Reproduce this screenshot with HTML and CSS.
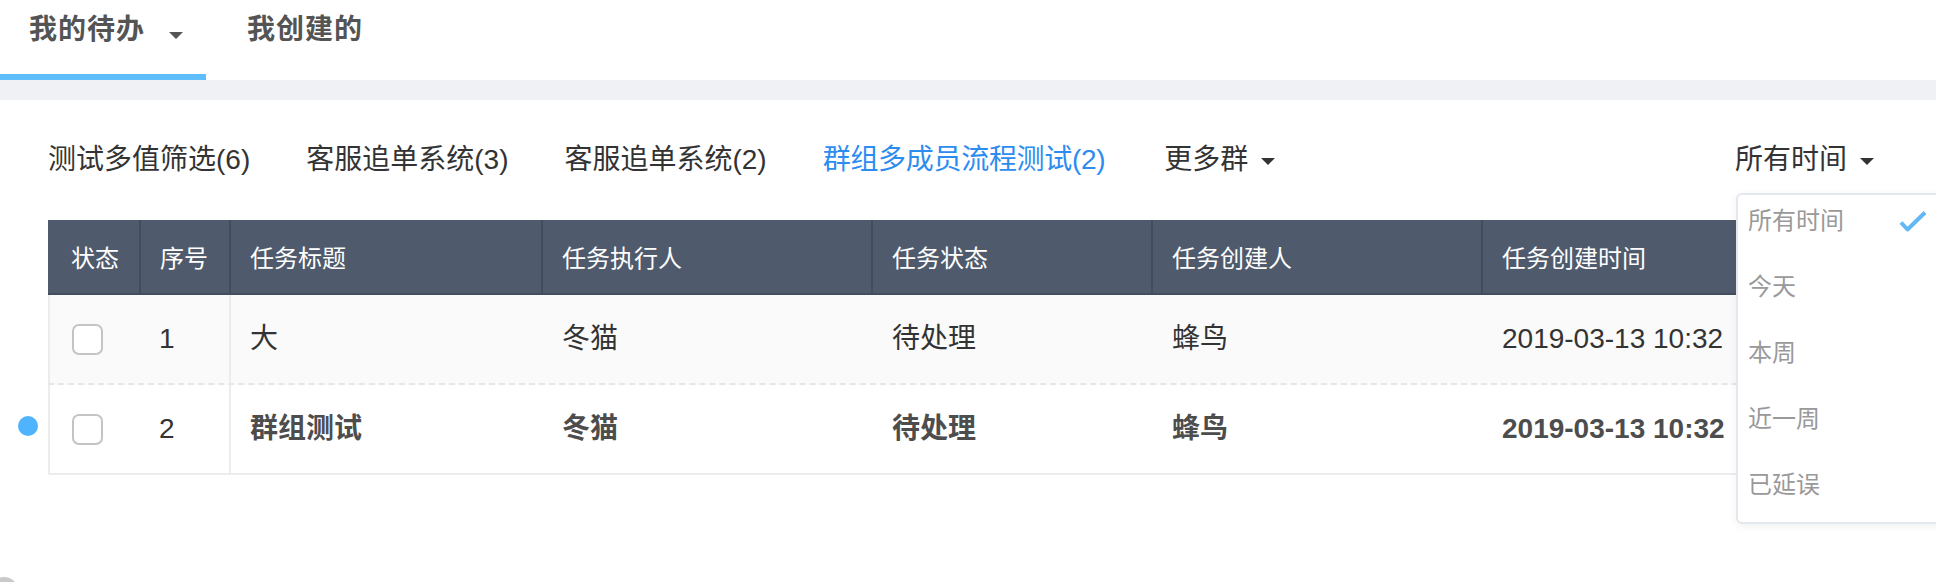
FILE: index.html
```html
<!DOCTYPE html>
<html lang="zh-CN">
<head>
<meta charset="utf-8">
<title>我的待办</title>
<link rel="stylesheet" href="styles.css">
</head>
<body>
<div class="page">
  <nav class="tabs">
    <div class="tab tab-first active"><span class="tab-label">我的待办</span><span class="caret caret-tab"></span></div>
    <div class="tab tab-second"><span class="tab-label">我创建的</span></div>
  </nav>
  <div class="band"></div>
  <main class="main">
    <div class="filters">
      <span class="filter">测试多值筛选(6)</span>
      <span class="filter">客服追单系统(3)</span>
      <span class="filter">客服追单系统(2)</span>
      <span class="filter filter-active">群组多成员流程测试(2)</span>
      <span class="filter filter-more">更多群<span class="caret caret-filter"></span></span>
      <div class="time">
        <span>所有时间</span><span class="caret caret-filter"></span>
        <ul class="dropdown">
          <li class="option selected"><span>所有时间</span>
            <svg class="check" width="28" height="21" viewBox="0 0 28 21"><polyline points="2,11.5 8.5,18.5 26,1.5" fill="none" stroke="#62b8f6" stroke-width="4" stroke-linejoin="round"/></svg>
          </li>
          <li class="option">今天</li>
          <li class="option">本周</li>
          <li class="option">近一周</li>
          <li class="option">已延误</li>
        </ul>
      </div>
    </div>

    <div class="table">
      <div class="grid thead">
        <div class="th th-first">状态</div>
        <div class="th">序号</div>
        <div class="th">任务标题</div>
        <div class="th">任务执行人</div>
        <div class="th">任务状态</div>
        <div class="th">任务创建人</div>
        <div class="th">任务创建时间</div>
      </div>
      <div class="grid trow trow-read">
        <div class="td td-first"><span class="checkbox"></span></div>
        <div class="td td-seq">1</div>
        <div class="td td-fixed">大</div>
        <div class="td">冬猫</div>
        <div class="td">待处理</div>
        <div class="td">蜂鸟</div>
        <div class="td">2019-03-13 10:32</div>
      </div>
      <div class="grid trow trow-unread">
        <span class="dot"></span>
        <div class="td td-first"><span class="checkbox"></span></div>
        <div class="td td-seq">2</div>
        <div class="td td-fixed">群组测试</div>
        <div class="td">冬猫</div>
        <div class="td">待处理</div>
        <div class="td">蜂鸟</div>
        <div class="td">2019-03-13 10:32</div>
      </div>
    </div>
  </main>
  <div class="fab"></div>
</div>
</body>
</html>
```

FILE: styles.css
```css
html, body {
  margin: 0;
  padding: 0;
  overflow: hidden;
  background: #fff;
}

body {
  font-family: "Liberation Sans", "Noto Sans CJK SC", sans-serif;
  color: #333;
  width: 1936px;
  height: 582px;
}

.page {
  width: 1936px;
}

/* top tabs */
.tabs {
  display: flex;
  height: 80px;
}

.tab {
  box-sizing: border-box;
  height: 80px;
  display: flex;
  align-items: flex-start;
  padding-top: 10px;
  border-bottom: 6px solid transparent;
  color: #545454;
  font-size: 28px;
  font-weight: 700;
}

.tab-label {
  line-height: 40px;
  letter-spacing: 1px;
}

.tab-first {
  padding-left: 29px;
  padding-right: 23px;
}

.tab-second {
  margin-left: 12px;
  padding-left: 29px;
  padding-right: 29px;
}

.tab.active {
  border-bottom-color: #5fbdfb;
}

.caret {
  display: inline-block;
  width: 0;
  height: 0;
  border-left: 7.5px solid transparent;
  border-right: 7.5px solid transparent;
  border-top: 7px solid #333;
}

.caret-tab {
  border-top-color: #555;
  margin-left: 24px;
  margin-top: 22px;
}

.band {
  height: 20px;
  background: #eff1f5;
}

/* main */
.main {
  padding: 0 48px;
}

.filters {
  display: flex;
  align-items: center;
  height: 40px;
  padding: 40px 0;
  font-size: 28px;
  line-height: 40px;
  color: #333;
}

.filter {
  margin-right: 56px;
  white-space: nowrap;
}

.filter-active {
  color: #2d8cf0;
  letter-spacing: -0.3px;
}

.filter-more,
.time {
  display: inline-flex;
  align-items: center;
}

.filter-more {
  margin-left: 3px;
}

.caret-filter {
  margin-left: 13px;
  margin-top: 3px;
}

.time {
  position: relative;
  margin-left: auto;
  margin-right: 14px;
}

.dropdown {
  position: absolute;
  left: 1px;
  top: 53px;
  z-index: 10;
  box-sizing: border-box;
  width: 212px;
  margin: 0;
  padding: 6px 19px 17px 10px;
  list-style: none;
  background: #fff;
  border: 2px solid #e3e8ee;
  border-radius: 6px;
  box-shadow: 0 2px 8px rgba(0, 0, 0, 0.06);
  display: flex;
  flex-direction: column;
  gap: 26px;
}

.option {
  display: flex;
  align-items: center;
  justify-content: space-between;
  height: 40px;
  line-height: 40px;
  font-size: 24px;
  color: #999;
}

.check {
  display: block;
}

/* table */
.table {
  width: 1840px;
}

.grid {
  display: grid;
  grid-template-columns: 91px 90px 312px 330px 280px 330px 1fr;
}

.thead {
  box-sizing: border-box;
  height: 75px;
  background: #4f5b6d;
  border-bottom: 2px solid #434e5f;
  color: #fff;
  font-size: 24px;
}

.th {
  display: flex;
  align-items: center;
  padding-left: 19px;
  border-left: 2px solid #414c5d;
  white-space: nowrap;
}

.th-first {
  border-left: none;
  padding-left: 23px;
}

.trow {
  position: relative;
  box-sizing: border-box;
  height: 90px;
  font-size: 28px;
  line-height: 40px;
}

.trow-read {
  background: #fafafa;
  color: #333;
  border-bottom: 2px dashed #e6e6e6;
}

.trow-unread {
  background: #fff;
  color: #4d4d4d;
  font-weight: 700;
  border-bottom: 2px solid #ececec;
}

.td {
  display: flex;
  align-items: center;
  padding-left: 19px;
  border-left: 2px solid transparent;
  white-space: nowrap;
}

.td-first {
  border-left-color: #ececec;
  padding-left: 22px;
}

.td-seq {
  padding-left: 18px;
  font-weight: 400;
  color: #333;
}

.td-fixed {
  border-left-color: #ececec;
}

.checkbox {
  display: block;
  box-sizing: border-box;
  width: 31px;
  height: 31px;
  border: 2px solid #c4c4c4;
  border-radius: 7px;
  background: #fff;
}

.dot {
  position: absolute;
  left: -30px;
  top: 31px;
  width: 20px;
  height: 20px;
  border-radius: 50%;
  background: #4fb3fd;
}

.fab {
  position: fixed;
  left: -10px;
  top: 577px;
  width: 28px;
  height: 28px;
  border-radius: 50%;
  background: #c9c9c9;
}
```
